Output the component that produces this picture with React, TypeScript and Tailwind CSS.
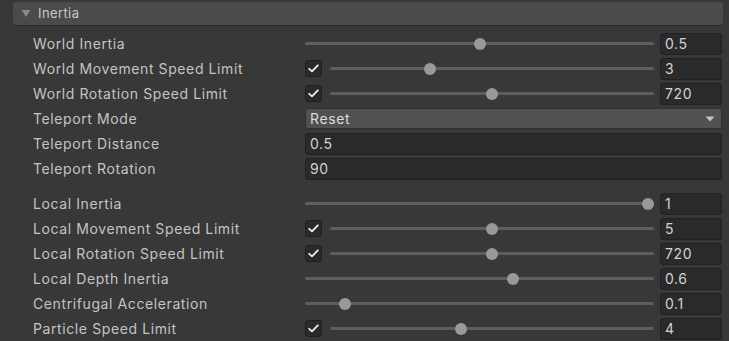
import React from "react";

type Row =
  | { kind: "slider"; label: string; value: string; v: number; toggle?: boolean }
  | { kind: "dropdown"; label: string; value: string }
  | { kind: "text"; label: string; value: string }
  | { kind: "spacer" };

const rows: Row[] = [
  { kind: "slider", label: "World Inertia", value: "0.5", v: 0.5 },
  { kind: "slider", label: "World Movement Speed Limit", value: "3", v: 0.3, toggle: true },
  { kind: "slider", label: "World Rotation Speed Limit", value: "720", v: 0.5, toggle: true },
  { kind: "dropdown", label: "Teleport Mode", value: "Reset" },
  { kind: "text", label: "Teleport Distance", value: "0.5" },
  { kind: "text", label: "Teleport Rotation", value: "90" },
  { kind: "spacer" },
  { kind: "slider", label: "Local Inertia", value: "1", v: 1 },
  { kind: "slider", label: "Local Movement Speed Limit", value: "5", v: 0.5, toggle: true },
  { kind: "slider", label: "Local Rotation Speed Limit", value: "720", v: 0.5, toggle: true },
  { kind: "slider", label: "Local Depth Inertia", value: "0.6", v: 0.6 },
  { kind: "slider", label: "Centrifugal Acceleration", value: "0.1", v: 0.1 },
  { kind: "slider", label: "Particle Speed Limit", value: "4", v: 0.4, toggle: true },
];

function Check() {
  return (
    <div className="w-[17px] h-[17px] rounded-[3px] bg-[#2a2a2a] border border-[#1f1f1f] flex items-center justify-center shrink-0">
      <svg width="11" height="9" viewBox="0 0 11 9">
        <path d="M1.2 4.8 L4 7.4 L9.8 1.4" fill="none" stroke="#eeeeee" strokeWidth="1.8" strokeLinecap="round" strokeLinejoin="round" />
      </svg>
    </div>
  );
}

function Slider({ v }: { v: number }) {
  return (
    <div className="relative flex-1 h-[12px] flex items-center">
      <div className="w-full h-[3px] bg-[#5e5e5e] rounded-full" />
      <div
        className="absolute top-0 w-[12px] h-[12px] rounded-full bg-[#999999]"
        style={{ left: `calc(${v} * (100% - 12px))` }}
      />
    </div>
  );
}

function NumField({ value }: { value: string }) {
  return (
    <div className="w-[62px] h-[22px] rounded-[3px] bg-[#2a2a2a] border border-[#212121] flex items-center px-[4px] text-[#d2d2d2] shrink-0">
      {value}
    </div>
  );
}

export default function App() {
  return (
    <div
      className="w-[729px] h-[341px] bg-[#383838] overflow-hidden text-[14px] tracking-[0.6px] text-[#c4c4c4]"
      style={{ fontFamily: "Inter, 'Noto Sans', sans-serif" }}
    >
      <div className="pt-[2px] pl-[13px] pr-[6px]">
        <div className="h-[24px] rounded-[3px] bg-[#4b4b4b] border-b border-[#2b2b2b] flex items-center pl-[8px] text-[13px] tracking-[0.4px] text-[#c8c8c8]">
          <svg width="10" height="9" viewBox="0 0 10 9" className="mr-[7px]">
            <path d="M0.5 1 L9.5 1 L5 8 Z" fill="#8a8a8a" />
          </svg>
          Inertia
        </div>
      </div>
      <div className="pt-[5px] pl-[33px] pr-[7px] flex flex-col">
        {rows.map((r, i) => {
          if (r.kind === "spacer") return <div key={i} className="h-[10px]" />;
          return (
            <div key={i} className="h-[25px] flex items-center">
              <div className="w-[272px] shrink-0 whitespace-nowrap">{r.label}</div>
              {r.kind === "slider" && (
                <div className="flex-1 flex items-center">
                  {r.toggle && (
                    <div className="mr-[8px] flex">
                      <Check />
                    </div>
                  )}
                  <Slider v={r.v} />
                  <div className="ml-[6px]">
                    <NumField value={r.value} />
                  </div>
                </div>
              )}
              {r.kind === "dropdown" && (
                <div className="flex-1 h-[21px] rounded-[3px] bg-[#515151] border border-[#303030] flex items-center justify-between pl-[4px] pr-[6px] text-[#dcdcdc]">
                  <span>{r.value}</span>
                  <svg width="10" height="6" viewBox="0 0 10 6">
                    <path d="M0.5 0.5 L9.5 0.5 L5 5.5 Z" fill="#c4c4c4" />
                  </svg>
                </div>
              )}
              {r.kind === "text" && (
                <div className="flex-1 h-[22px] rounded-[3px] bg-[#2a2a2a] border border-[#212121] flex items-center px-[4px] text-[#d2d2d2]">
                  {r.value}
                </div>
              )}
            </div>
          );
        })}
      </div>
    </div>
  );
}
